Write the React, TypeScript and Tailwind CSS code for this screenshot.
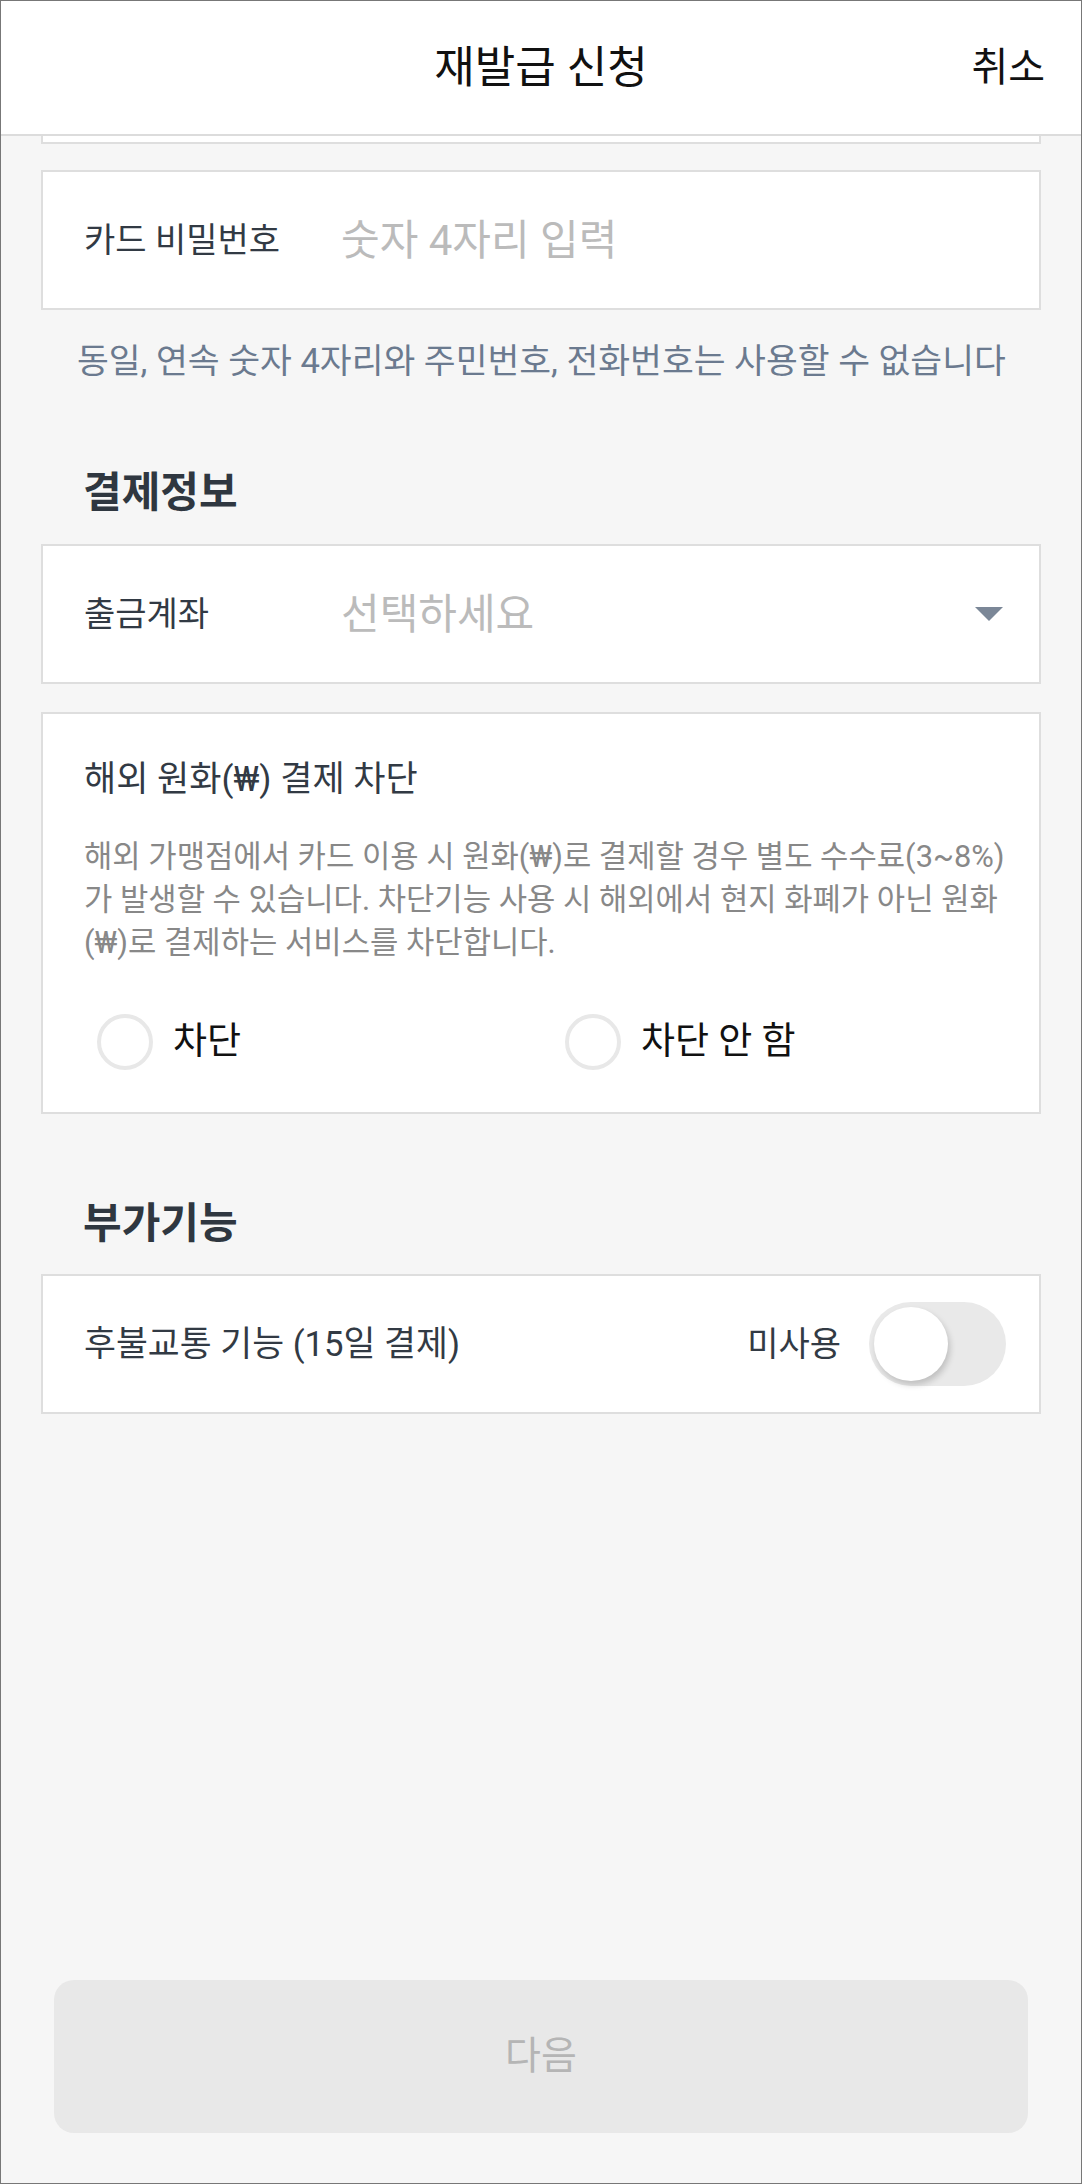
import { useState } from "react";

const font = "font-['Roboto','Noto_Sans_CJK_KR',sans-serif]";

function FieldRow({ label, placeholder, dropdown }: { label: string; placeholder: string; dropdown?: boolean }) {
  return (
    <div className="mx-[40px] h-[140px] bg-white border-2 border-[#dedede] flex items-center pl-[41px] pr-[36px]">
      <span className="w-[257px] shrink-0 text-[34px] text-[#323a44]">{label}</span>
      <span className="flex-1 text-[42px] text-[#bbbbbb]">{placeholder}</span>
      {dropdown && (
        <svg width="28" height="14" viewBox="0 0 28 14">
          <path d="M0 0 H28 L14 14 Z" fill="#7b8797" />
        </svg>
      )}
    </div>
  );
}

function Radio({ label, checked, onClick }: { label: string; checked: boolean; onClick: () => void }) {
  return (
    <button onClick={onClick} className="flex items-center gap-[20px] text-left">
      <span className="w-[56px] h-[56px] rounded-full border-[4px] border-[#e8e8e8] bg-white flex items-center justify-center">
        {checked && <span className="w-[28px] h-[28px] rounded-full bg-[#3d7cf2]" />}
      </span>
      <span className="text-[37px] text-[#111111]">{label}</span>
    </button>
  );
}

export default function App() {
  const [block, setBlock] = useState<"on" | "off" | null>(null);
  const [transit, setTransit] = useState(false);

  return (
    <div className={`${font} w-[1082px] h-[2184px] border border-[#777777] bg-[#f6f6f6] flex flex-col overflow-hidden`}>
      {/* header */}
      <header className="h-[135px] shrink-0 bg-white border-b-2 border-[#dcdcdc] grid grid-cols-[1fr_auto_1fr] items-center">
        <div />
        <h1 className="text-[44px] text-[#111111]">재발급 신청</h1>
        <button className="justify-self-end mr-[36px] text-[40px] text-[#111111]">취소</button>
      </header>

      {/* previous field, scrolled under header */}
      <div className="mx-[40px] h-[8px] shrink-0 bg-white border-x-2 border-b-2 border-[#dedede]" />

      <div className="mt-[26px]">
        <FieldRow label="카드 비밀번호" placeholder="숫자 4자리 입력" />
      </div>
      <p className="mt-[29px] ml-[76px] text-[34.6px] leading-[44px] text-[#6b7a8f] whitespace-nowrap">
        동일, 연속 숫자 4자리와 주민번호, 전화번호는 사용할 수 없습니다
      </p>

      <h2 className="mt-[85px] ml-[82px] text-[42px] leading-[50px] font-bold text-[#2f3740]">결제정보</h2>
      <div className="mt-[26px]">
        <FieldRow label="출금계좌" placeholder="선택하세요" dropdown />
      </div>

      <div className="mt-[28px] mx-[40px] bg-white border-2 border-[#dedede] px-[41px] pt-[42px] pb-[42px]">
        <div className="text-[35px] leading-[48px] text-[#323a44]">해외 원화(₩) 결제 차단</div>
        <p className="mt-[31px] text-[30.8px] leading-[43px] text-[#888888] whitespace-nowrap">
          해외 가맹점에서 카드 이용 시 원화(₩)로 결제할 경우 별도 수수료(3~8%)
          <br />
          가 발생할 수 있습니다. 차단기능 사용 시 해외에서 현지 화폐가 아닌 원화
          <br />
          (₩)로 결제하는 서비스를 차단합니다.
        </p>
        <div className="mt-[50px] h-[56px] flex pl-[13px]">
          <div className="w-[468px]">
            <Radio label="차단" checked={block === "on"} onClick={() => setBlock("on")} />
          </div>
          <Radio label="차단 안 함" checked={block === "off"} onClick={() => setBlock("off")} />
        </div>
      </div>

      <h2 className="mt-[85px] ml-[82px] text-[42px] leading-[50px] font-bold text-[#2f3740]">부가기능</h2>
      <div className="mt-[25px] mx-[40px] h-[140px] bg-white border-2 border-[#dedede] flex items-center pl-[41px] pr-[33px]">
        <span className="flex-1 text-[34.7px] text-[#323a44]">후불교통 기능 (15일 결제)</span>
        <span className="text-[34px] text-[#323a44] mr-[28px]">{transit ? "사용" : "미사용"}</span>
        <button
          onClick={() => setTransit(!transit)}
          className={`w-[137px] h-[84px] rounded-full p-[5px] flex ${transit ? "bg-[#3d7cf2] justify-end" : "bg-[#e9e9e9] justify-start"}`}
        >
          <span className="w-[74px] h-[74px] rounded-full bg-white shadow-[2px_4px_6px_rgba(0,0,0,0.18)]" />
        </button>
      </div>

      <div className="flex-1" />

      <button className="mx-[53px] mb-[50px] h-[153px] shrink-0 rounded-[20px] bg-[#e8e8e8] text-[39px] text-[#b5b5b5]">
        다음
      </button>
    </div>
  );
}
